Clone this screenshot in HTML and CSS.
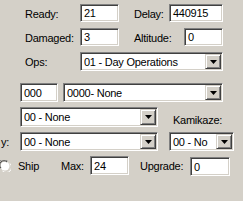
FILE: index.html
```html
<!DOCTYPE html>
<html lang="en">
<head>
    <meta charset="UTF-8">
    <title>Unit Properties</title>
    <link rel="stylesheet" href="styles.css">
</head>
<body>
    <div class="form">
        <div class="row row-ready">
            <span class="label label-main">Ready:</span>
            <div class="field w39">21</div>
            <span class="label label-delay">Delay:</span>
            <div class="field w54">440915</div>
        </div>

        <div class="row row-damaged">
            <span class="label label-main">Damaged:</span>
            <div class="field w39">3</div>
            <span class="label label-alt">Altitude:</span>
            <div class="field w39">0</div>
        </div>

        <div class="row row-ops">
            <span class="label label-main">Ops:</span>
            <div class="field combo w143">
                <span class="combo-text">01 - Day Operations</span>
                <span class="drop"><svg width="7" height="4" viewBox="0 0 7 4"><path d="M0 0h7L3.5 4z" fill="#000"/></svg></span>
            </div>
        </div>

        <div class="row row-target">
            <div class="field w38">000</div>
            <div class="field combo w160 gap5">
                <span class="combo-text">0000- None</span>
                <span class="drop"><svg width="7" height="4" viewBox="0 0 7 4"><path d="M0 0h7L3.5 4z" fill="#000"/></svg></span>
            </div>
        </div>

        <div class="row row-mission">
            <div class="field combo w138">
                <span class="combo-text">00 - None</span>
                <span class="drop"><svg width="7" height="4" viewBox="0 0 7 4"><path d="M0 0h7L3.5 4z" fill="#000"/></svg></span>
            </div>
            <span class="label label-kamikaze">Kamikaze:</span>
        </div>

        <div class="row row-priority">
            <span class="label label-cut">y:</span>
            <div class="field combo w138">
                <span class="combo-text">00 - None</span>
                <span class="drop"><svg width="7" height="4" viewBox="0 0 7 4"><path d="M0 0h7L3.5 4z" fill="#000"/></svg></span>
            </div>
            <div class="field combo w65 gap11">
                <span class="combo-text">00 - No</span>
                <span class="drop"><svg width="7" height="4" viewBox="0 0 7 4"><path d="M0 0h7L3.5 4z" fill="#000"/></svg></span>
            </div>
        </div>

        <div class="row row-ship">
            <svg class="radio" width="12" height="12" viewBox="0 0 12 12">
                <path d="M1 8.5A5 5 0 0 1 8.5 1" stroke="#808080" fill="none"/>
                <circle cx="6" cy="6" r="4.5" fill="#fff"/>
                <path d="M2 8A4 4 0 0 1 8 2" stroke="#404040" fill="none"/>
                <path d="M3.5 11A5 5 0 0 0 11 3.5" stroke="#fff" fill="none"/>
            </svg>
            <span class="label label-ship">Ship</span>
            <span class="label label-max">Max:</span>
            <div class="field w39">24</div>
            <span class="label label-upgrade">Upgrade:</span>
            <div class="field w40 low">0</div>
        </div>
    </div>
</body>
</html>
```

FILE: styles.css
```css
* {
    box-sizing: border-box;
}
body {
    margin: 0;
    background-color: #d4d0c8;
    font-family: "Liberation Sans", Arial, sans-serif;
    font-size: 11px;
    letter-spacing: -0.25px;
    color: #000;
    overflow: hidden;
}
.form {
    padding-top: 4px;
}
.row {
    display: flex;
    align-items: center;
    height: 18px;
    margin-bottom: 6px;
}
.row-ready,
.row-damaged {
    padding-left: 25px;
}
.row-ops {
    padding-left: 25px;
    height: 19px;
    margin-bottom: 12px;
}
.row-target {
    padding-left: 20px;
    height: 19px;
    margin-bottom: 5px;
}
.row-mission {
    padding-left: 20px;
    height: 20px;
    margin-bottom: 5px;
}
.row-priority {
    height: 19px;
    margin-bottom: 5px;
}
.row-ship {
    height: 19px;
}
.label {
    white-space: nowrap;
    padding-top: 1px;
}
.label-main {
    width: 55px;
}
.label-delay {
    width: 35px;
    margin-left: 15px;
}
.label-alt {
    width: 50px;
    margin-left: 15px;
}
.label-kamikaze {
    margin-left: 15px;
    align-self: flex-end;
    padding-bottom: 1px;
}
.label-cut {
    width: 20px;
    padding-left: 1px;
}
.label-ship {
    margin-left: 7px;
}
.label-max {
    margin-left: 22px;
    width: 29px;
}
.label-upgrade {
    margin-left: 11px;
    width: 50px;
}
.field {
    height: 100%;
    display: flex;
    align-items: center;
    padding: 0 3px;
    background-color: #fff;
    border: 1px solid;
    border-color: #808080 #fff #fff #808080;
    box-shadow: inset 1px 1px 0 #404040, inset -1px -1px 0 #d4d0c8;
    white-space: nowrap;
    overflow: hidden;
}
.field.low {
    margin-top: 2px;
}
.combo {
    padding-right: 0;
}
.combo-text {
    flex: 1;
    min-width: 0;
    overflow: hidden;
}
.drop {
    flex: none;
    width: 16px;
    height: calc(100% - 2px);
    margin: 1px;
    display: flex;
    align-items: center;
    justify-content: center;
    background-color: #d4d0c8;
    border: 1px solid;
    border-color: #d4d0c8 #404040 #404040 #d4d0c8;
    box-shadow: inset 1px 1px 0 #fff, inset -1px -1px 0 #808080;
}
.radio {
    margin-left: -1px;
    flex: none;
}
.w38 { width: 38px; }
.w39 { width: 39px; }
.w40 { width: 40px; }
.w54 { width: 54px; }
.w65 { width: 65px; }
.w138 { width: 138px; }
.w143 { width: 143px; }
.w160 { width: 160px; }
.gap5 { margin-left: 5px; }
.gap11 { margin-left: 11px; }
```
